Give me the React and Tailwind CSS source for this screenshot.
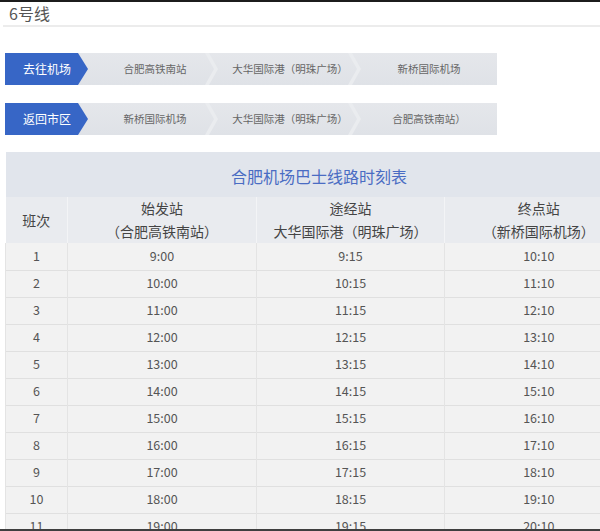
import React from "react";

const rows = [
  ["1", "9:00", "9:15", "10:10"],
  ["2", "10:00", "10:15", "11:10"],
  ["3", "11:00", "11:15", "12:10"],
  ["4", "12:00", "12:15", "13:10"],
  ["5", "13:00", "13:15", "14:10"],
  ["6", "14:00", "14:15", "15:10"],
  ["7", "15:00", "15:15", "16:10"],
  ["8", "16:00", "16:15", "17:10"],
  ["9", "17:00", "17:15", "18:10"],
  ["10", "18:00", "18:15", "19:10"],
  ["11", "19:00", "19:15", "20:10"],
  ["12", "20:00", "20:15", "21:10"],
];

function Chevron() {
  return (
    <svg width="13" height="32" viewBox="0 0 13 32" className="shrink-0 block">
      <polygon points="0,0 4,0 13,16 4,32 0,32 9,16" fill="#eaecef" />
    </svg>
  );
}

function RouteBar({ label, stops }) {
  return (
    <div className="flex h-[32px] w-[492px] bg-gradient-to-b from-[#e5e7eb] to-[#dfe2e7]">
      <div className="w-[83px] shrink-0 bg-[#3766c6] [clip-path:polygon(0_0,73px_0,83px_50%,73px_100%,0_100%)] flex items-center pl-[18px] text-white text-[12px] leading-none">
        {label}
      </div>
      <div className="w-[117px] shrink-0 flex items-center justify-center pl-[17px] text-[10.5px] text-[#666] leading-none">
        {stops[0]}
      </div>
      <Chevron />
      <div className="w-[130px] shrink-0 flex items-center justify-center pl-[14px] text-[10.5px] text-[#666] leading-none">
        {stops[1]}
      </div>
      <Chevron />
      <div className="flex-1 flex items-center justify-center text-[10.5px] text-[#666] leading-none">
        {stops[2]}
      </div>
    </div>
  );
}

export default function App() {
  return (
    <div className="relative w-[600px] h-[531px] overflow-hidden bg-white font-['Noto_Sans_CJK_SC',sans-serif]">
      <div className="h-[2px] bg-[#1c1c1c]" />
      <div className="pl-[9px] pt-[1px] h-[23px] text-[16px] leading-[20px] text-[#555]">6号线</div>
      <div className="ml-[3px] h-[2px] bg-[#ececec]" />

      <div className="pl-[5px] pt-[26px] flex flex-col gap-[18px]">
        <RouteBar label="去往机场" stops={["合肥高铁南站", "大华国际港（明珠广场）", "新桥国际机场"]} />
        <RouteBar label="返回市区" stops={["新桥国际机场", "大华国际港（明珠广场）", "合肥高铁南站）"]} />
      </div>

      <div className="pl-[5px] pt-[17px]">
        <table className="table-fixed w-[627px] border-collapse text-center">
          <colgroup>
            <col className="w-[62px]" />
            <col className="w-[189px]" />
            <col className="w-[188px]" />
            <col className="w-[188px]" />
          </colgroup>
          <thead>
            <tr>
              <th colSpan={4} className="h-[45px] bg-[#e1e5ec] text-[16px] font-normal text-[#4a6cc3] leading-none pt-[2px]">
                合肥机场巴士线路时刻表
              </th>
            </tr>
            <tr className="bg-[#e9ebef] text-[14px] font-normal text-[#444]">
              <th className="h-[46px] font-normal border-r border-[#f3f4f6]">班次</th>
              <th className="font-normal border-r border-[#f3f4f6] leading-[23px]">
                始发站
                <br />
                （合肥高铁南站）
              </th>
              <th className="font-normal border-r border-[#f3f4f6] leading-[23px]">
                途经站
                <br />
                大华国际港（明珠广场）
              </th>
              <th className="font-normal leading-[23px]">
                终点站
                <br />
                （新桥国际机场）
              </th>
            </tr>
          </thead>
          <tbody className="bg-[#f2f2f2] text-[12.5px] text-[#555]">
            {rows.map((r) => (
              <tr key={r[0]} className="h-[27px] border-b border-[#e0e0e0]">
                <td className="border-l border-[#e4e4e4] border-r border-r-[#e4e4e4]">{r[0]}</td>
                <td className="border-r border-[#e4e4e4]">{r[1]}</td>
                <td className="border-r border-[#e4e4e4]">{r[2]}</td>
                <td>{r[3]}</td>
              </tr>
            ))}
          </tbody>
        </table>
      </div>

      <div className="absolute left-0 right-0 bottom-0 h-[2px] bg-[#3f3f3f]" />
    </div>
  );
}
